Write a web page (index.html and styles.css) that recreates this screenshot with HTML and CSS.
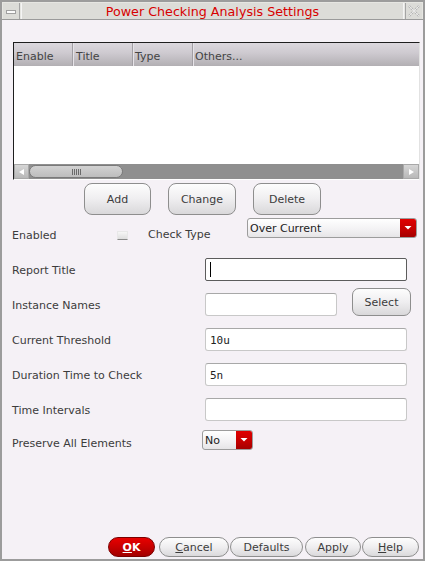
FILE: index.html
```html
<!DOCTYPE html>
<html>
<head>
<meta charset="utf-8">
<link rel="stylesheet" href="styles.css">
</head>
<body>
<div class="window">
  <div class="titlebar">
    <div class="tb-btn tb-left"><span class="min-icon"></span></div>
    <div class="tb-title">Power Checking Analysis Settings</div>
    <div class="tb-btn tb-right">
      <svg width="14" height="14" viewBox="0 0 14 14">
        <path d="M2 2 L12 12 M12 2 L2 12" stroke="#b4b4b4" stroke-width="2.2" fill="none" stroke-dasharray="2 1"/>
        <path d="M2 2 L12 12 M12 2 L2 12" stroke="#f4f4f4" stroke-width="0.8" fill="none"/>
      </svg>
    </div>
  </div>
  <div class="content">
    <div class="table">
      <div class="thead">
        <div class="th th-enable">Enable</div>
        <div class="th th-title">Title</div>
        <div class="th th-type">Type</div>
        <div class="th th-others">Others...</div>
      </div>
      <div class="tbody"></div>
      <div class="hscroll">
        <div class="sb-btn">
          <svg width="8" height="8" viewBox="0 0 8 8"><polygon points="6,1 6,7 1,4" fill="#fff"/></svg>
        </div>
        <div class="sb-track">
          <div class="thumb"><span class="grip"></span></div>
        </div>
        <div class="sb-btn sb-right">
          <svg width="8" height="8" viewBox="0 0 8 8"><polygon points="2,1 2,7 7,4" fill="#fff"/></svg>
        </div>
      </div>
    </div>

    <div class="btnrow">
      <div class="btn btn-add">Add</div>
      <div class="btn btn-change">Change</div>
      <div class="btn btn-delete">Delete</div>
    </div>

    <div class="form">
      <div class="row">
        <div class="lbl lbl-enabled">Enabled</div>
        <div class="checkbox"></div>
        <div class="checktype">Check Type</div>
        <div class="combo combo-type">
          <span class="combo-text">Over Current</span>
          <span class="combo-arrow"><svg width="16" height="20" viewBox="0 0 16 20"><polygon points="4.5,8 11.5,8 8,11.5" fill="#fff"/></svg></span>
        </div>
      </div>
      <div class="row">
        <div class="lbl">Report Title</div>
        <div class="input input-wide input-focus"><span class="caret"></span></div>
      </div>
      <div class="row">
        <div class="lbl">Instance Names</div>
        <div class="input input-short"></div>
        <div class="btn btn-select">Select</div>
      </div>
      <div class="row">
        <div class="lbl">Current Threshold</div>
        <div class="input input-wide"><span class="val">10u</span></div>
      </div>
      <div class="row">
        <div class="lbl">Duration Time to Check</div>
        <div class="input input-wide"><span class="val">5n</span></div>
      </div>
      <div class="row">
        <div class="lbl">Time Intervals</div>
        <div class="input input-wide"></div>
      </div>
      <div class="row row-last">
        <div class="lbl lbl-preserve">Preserve All Elements</div>
        <div class="combo combo-no">
          <span class="combo-text">No</span>
          <span class="combo-arrow"><svg width="16" height="20" viewBox="0 0 16 20"><polygon points="4.5,8 11.5,8 8,11.5" fill="#fff"/></svg></span>
        </div>
      </div>
    </div>

    <div class="footer">
      <div class="fbtn fbtn-ok"><u>O</u>K</div>
      <div class="fbtn fbtn-cancel"><u>C</u>ancel</div>
      <div class="fbtn fbtn-defaults">Defaults</div>
      <div class="fbtn fbtn-apply">Apply</div>
      <div class="fbtn fbtn-help"><u>H</u>elp</div>
    </div>
  </div>
</div>
</body>
</html>
```

FILE: styles.css
```css
* { box-sizing: border-box; }

body {
  margin: 0;
  font-family: "DejaVu Sans", sans-serif;
  font-size: 11px;
  color: #3c3c3c;
  background: #f5f1f6;
}

.window {
  width: 425px;
  height: 561px;
  border: 2px solid #9c9c9c;
  background: #f5f1f6;
  display: flex;
  flex-direction: column;
}

/* title bar */
.titlebar {
  height: 18px;
  display: flex;
  padding: 1px 1px 0 1px;
  background: #e6e6e2;
  border-bottom: 1px solid #9a9a9a;
}
.tb-btn {
  width: 16px;
  height: 16px;
  background: #dcdcd8;
  display: flex;
  align-items: center;
  justify-content: center;
}
.tb-left { border-right: 1px solid #a4a4a4; width: 17px; }
.tb-right { border-left: 1px solid #a4a4a4; width: 17px; }
.min-icon {
  width: 10px;
  height: 4px;
  background: #fbfbfb;
  border: 1px solid #a0a0a0;
  margin-top: 1px;
}
.tb-title {
  flex: 1;
  margin: 0 1px;
  background: #dcdcd8;
  border-left: 1px solid #f4f4f4;
  border-right: 1px solid #f4f4f4;
  color: #d80000;
  font-size: 12.7px;
  text-align: center;
  line-height: 17px;
}

.content {
  flex: 1;
  display: flex;
  flex-direction: column;
  padding: 0 3px 0 10px;
}

/* table */
.table {
  margin-top: 22px;
  margin-left: 1px;
  height: 138px;
  border-top: 1px solid #1e1e1e;
  border-left: 1px solid #1e1e1e;
  border-right: 1px solid #e2e2e2;
  border-bottom: 1px solid #ffffff;
  display: flex;
  flex-direction: column;
}
.thead {
  height: 23px;
  display: flex;
  background: linear-gradient(#dcd8de, #cdc9cf 45%, #b2afb3);
  color: #444;
}
.th {
  padding-left: 2px;
  padding-top: 7px;
  border-right: 1px solid #a29fa4;
  box-shadow: inset 1px 0 0 #e6e3e8;
}
.th-enable { width: 59px; box-shadow: none; }
.th-title { width: 60px; padding-left: 3px; }
.th-type { width: 60px; padding-left: 2px; }
.th-others { flex: 1; border-right: none; }
.tbody {
  flex: 1;
  background: #ffffff;
}
.hscroll {
  height: 15px;
  display: flex;
  background: #8f8f8f;
}
.sb-btn {
  width: 15px;
  height: 15px;
  background: linear-gradient(#d6d6d6, #b8b8b8);
  border: 1px solid #a8a8a8;
  display: flex;
  align-items: center;
  justify-content: center;
}
.sb-right { width: 16px; }
.sb-track {
  flex: 1;
  padding: 1px 0;
}
.thumb {
  width: 94px;
  height: 13px;
  border: 1px solid #7a7a7a;
  border-radius: 7px;
  background: linear-gradient(#d2d2d2, #bdbdbd);
  display: flex;
  align-items: center;
  justify-content: center;
}
.grip {
  width: 9px;
  height: 6px;
  background: repeating-linear-gradient(90deg, #6a6a6a 0 1px, transparent 1px 2px);
}

/* buttons */
.btnrow {
  margin-top: 3px;
  height: 32px;
  display: flex;
  padding-left: 72px;
}
.btn {
  height: 32px;
  border: 1px solid #8e8e8e;
  border-radius: 8px;
  background: linear-gradient(#fdfdfd, #efeef0 50%, #d9d8da);
  display: flex;
  align-items: center;
  justify-content: center;
  color: #3c3c3c;
  padding-top: 1px;
}
.btn-add { width: 67px; }
.btn-change { width: 68px; margin-left: 17px; }
.btn-delete { width: 68px; margin-left: 17px; }

/* form */
.form {
  margin-top: 2px;
  display: flex;
  flex-direction: column;
}
.row {
  height: 35px;
  display: flex;
  align-items: center;
}
.row-last { height: 31px; }
.lbl {
  width: 193px;
  padding-top: 2px;
}
.lbl-enabled { width: 105px; }
.lbl-preserve { width: 190px; }
.checkbox {
  width: 11px;
  height: 9px;
  margin-top: 1px;
  background: linear-gradient(#f6f6f6, #dedede);
  border: 1px solid #e8e8e8;
  border-bottom: 1px solid #8a8a8a;
}
.checktype {
  width: 99px;
  margin-left: 20px;
  margin-top: -1px;
}
.combo {
  height: 20px;
  border: 1px solid #9c9c9c;
  border-radius: 3px;
  background: linear-gradient(#ffffff, #f2f1f3 60%, #e6e5e7);
  display: flex;
  align-items: center;
  overflow: hidden;
  align-self: flex-start;
}
.combo-type {
  width: 170px;
  margin-top: 1px;
}
.combo-no {
  width: 51px;
  margin-top: 3px;
}
.combo-text {
  flex: 1;
  padding-left: 2px;
  padding-top: 1px;
  color: #222;
}
.combo-arrow {
  width: 16px;
  height: 20px;
  background: linear-gradient(#e20000, #c20000 60%, #a00000);
  display: flex;
}

.input {
  height: 23px;
  background: #ffffff;
  border: 1px solid #c8c8c8;
  border-top-color: #a8a8a8;
  border-radius: 3px;
  display: flex;
  align-items: center;
  padding-left: 4px;
}
.input-wide { width: 202px; }
.input-short { width: 132px; }
.input-focus {
  border-color: #5c5c5c;
  border-radius: 2px;
}
.caret {
  width: 1px;
  height: 15px;
  background: #000;
}
.val {
  font-family: "DejaVu Sans Mono", monospace;
  font-size: 11px;
  color: #222;
  padding-top: 1px;
}
.btn-select {
  width: 59px;
  height: 28px;
  margin-left: 15px;
  align-self: flex-start;
  margin-top: 1px;
  border-radius: 7px;
}

/* footer */
.footer {
  margin-top: auto;
  margin-bottom: 2px;
  margin-right: 1px;
  display: flex;
  justify-content: flex-end;
}
.fbtn {
  height: 20px;
  border: 1px solid #8e8e8e;
  border-radius: 10px;
  background: linear-gradient(#fdfdfd, #efeef0 50%, #dad9db);
  display: flex;
  align-items: center;
  justify-content: center;
  color: #3c3c3c;
  padding-top: 1px;
}
.fbtn-ok {
  width: 47px;
  background: linear-gradient(#e80000, #c80000 50%, #a20000);
  border-color: #7a0000;
  color: #ffffff;
  font-weight: bold;
}
.fbtn-cancel { width: 70px; margin-left: 4px; }
.fbtn-defaults { width: 73px; margin-left: 1px; }
.fbtn-apply { width: 56px; margin-left: 2px; }
.fbtn-help { width: 57px; margin-left: 1px; }
```
